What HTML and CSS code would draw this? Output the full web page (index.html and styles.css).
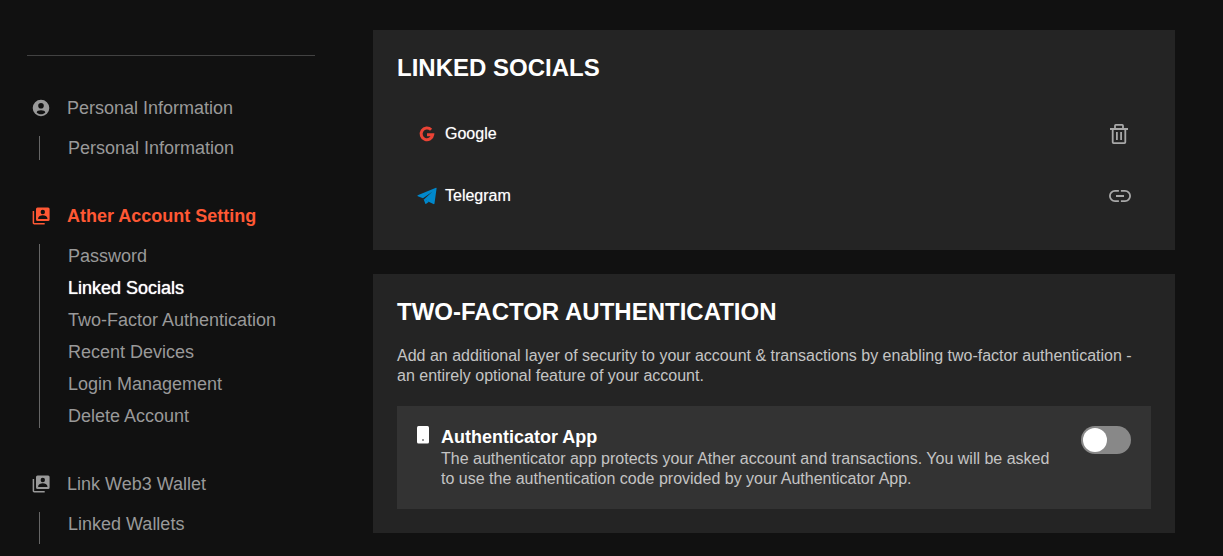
FILE: index.html
```html
<!DOCTYPE html>
<html lang="en">
<head>
<meta charset="utf-8">
<title>Account Settings</title>
<meta name="viewport" content="width=device-width, initial-scale=1">
<link rel="stylesheet" href="styles.css">
</head>
<body>
<div class="page">
  <nav class="sidebar" aria-label="Settings">
    <section class="group">
      <a class="group-title" href="#personal">
        <svg class="group-icon" viewBox="0 0 20 20" aria-hidden="true"><path fill="currentColor" fill-rule="evenodd" d="M10 1.700a8.300 8.300 0 1 0 0 16.600 8.300 8.300 0 0 0 0-16.600zM10 5a2.800 2.800 0 1 1 0 5.600A2.800 2.800 0 0 1 10 5zm0 7.200c2.300 0 4.300.9 4.300 2.200-1 1.200-2.500 1.800-4.300 1.800s-3.300-.6-4.300-1.800c0-1.300 2-2.200 4.300-2.200z"/></svg>
        Personal Information
      </a>
      <ul class="links">
        <li><a href="#personal">Personal Information</a></li>
      </ul>
    </section>
    <section class="group">
      <a class="group-title active" href="#account">
        <svg class="group-icon" viewBox="0 0 20 20" aria-hidden="true"><path fill="currentColor" fill-rule="evenodd" d="M6.500 1.600h10.600a1.500 1.500 0 0 1 1.500 1.500v10.500a1.500 1.500 0 0 1-1.500 1.500H6.500A1.500 1.500 0 0 1 5 13.600V3.100a1.500 1.500 0 0 1 1.500-1.500zM11.800 3.800a2.200 2.200 0 1 0 0 4.400 2.200 2.200 0 0 0 0-4.400zM7.200 13h9.200v-1c0-1.700-2.500-2.800-4.600-2.800S7.200 10.300 7.200 12z"/><path fill="none" stroke="currentColor" stroke-width="1.500" d="M2.400 5v12a.8.8 0 0 0 .8.800h10.500"/></svg>
        Ather Account Setting
      </a>
      <ul class="links">
        <li><a href="#password">Password</a></li>
        <li><a class="current" href="#socials" aria-current="page">Linked Socials</a></li>
        <li><a href="#two-factor">Two-Factor Authentication</a></li>
        <li><a href="#devices">Recent Devices</a></li>
        <li><a href="#login">Login Management</a></li>
        <li><a href="#delete">Delete Account</a></li>
      </ul>
    </section>
    <section class="group">
      <a class="group-title" href="#wallet">
        <svg class="group-icon" viewBox="0 0 20 20" aria-hidden="true"><path fill="currentColor" fill-rule="evenodd" d="M6.500 1.600h10.600a1.500 1.500 0 0 1 1.500 1.500v10.500a1.500 1.500 0 0 1-1.500 1.500H6.500A1.500 1.500 0 0 1 5 13.600V3.100a1.500 1.500 0 0 1 1.500-1.500zM11.800 3.800a2.200 2.200 0 1 0 0 4.400 2.200 2.200 0 0 0 0-4.400zM7.200 13h9.200v-1c0-1.700-2.500-2.800-4.600-2.800S7.200 10.300 7.200 12z"/><path fill="none" stroke="currentColor" stroke-width="1.500" d="M2.400 5v12a.8.8 0 0 0 .8.800h10.500"/></svg>
        Link Web3 Wallet
      </a>
      <ul class="links links-open">
        <li><a href="#wallets">Linked Wallets</a></li>
      </ul>
    </section>
  </nav>
  <main class="content">
    <section class="card" id="socials">
      <h2>LINKED SOCIALS</h2>
      <ul class="socials">
        <li class="social">
          <svg class="brand" viewBox="0 0 20 20" aria-hidden="true"><path fill="none" stroke="#ea4335" stroke-width="3" d="M14.100 5.800A5.800 5.800 0 1 0 15.700 10.700H10"/></svg>
          <span class="social-name">Google</span>
          <button class="icon-button" type="button" aria-label="Remove Google">
            <svg viewBox="0 0 24 24" aria-hidden="true"><path fill="none" stroke="currentColor" stroke-width="1.800" d="M3 7h18M8 7V3.700a.8.8 0 0 1 .8-.8h6.400a.8.8 0 0 1 .8.800V7M5.700 7v13.200a.9.900 0 0 0 .9.900h10.800a.9.900 0 0 0 .9-.9V7M9.900 10v8M14.100 10v8"/></svg>
          </button>
        </li>
        <li class="social">
          <svg class="brand" viewBox="0 0 20 20" aria-hidden="true"><path fill="#0088cc" d="M.7 9.200 19 1.700c.5-.1.700.2.600.6l-2.100 15.200c-.1.700-.6.900-1.100.6L6.900 13.400l8.400-7.600-9.300 6.500L.8 10.300c-.5-.4-.5-.8-.1-1.100z"/><path fill="#0088cc" d="M6.600 13.100 12 15.800l-2.800 2c-.4.300-.8.200-1-.2z"/></svg>
          <span class="social-name">Telegram</span>
          <button class="icon-button" type="button" aria-label="Link Telegram">
            <svg viewBox="0 0 24 24" aria-hidden="true"><path fill="none" stroke="currentColor" stroke-width="1.800" d="M11.900 6.900H8a5.100 5.100 0 0 0 0 10.200h3.900M13.900 6.900H18a5.100 5.100 0 0 1 0 10.200h-4.100M9 12h8"/></svg>
          </button>
        </li>
      </ul>
    </section>
    <section class="card" id="two-factor">
      <h2>TWO-FACTOR AUTHENTICATION</h2>
      <p class="intro">Add an additional layer of security to your account &amp; transactions by enabling two-factor authentication - an entirely optional feature of your account.</p>
      <div class="method">
        <svg class="phone" viewBox="0 0 12 18" aria-hidden="true"><rect width="12" height="17.500" rx="1.500" fill="#fff"/><rect x="5" y="13" width="2" height="2" fill="#999"/></svg>
        <div class="method-text">
          <label class="method-title" for="authenticator">Authenticator App</label>
          <p id="authenticator-help">The authenticator app protects your Ather account and transactions. You will be asked to use the authentication code provided by your Authenticator App.</p>
        </div>
        <input class="switch" id="authenticator" type="checkbox" role="switch" aria-describedby="authenticator-help">
      </div>
    </section>
  </main>
</div>
</body>
</html>
```
FILE: styles.css
```css
* {
  box-sizing: border-box;
}

body {
  margin: 0;
  background: #111;
  color: #fff;
  font: 16px/20px "Liberation Sans", Arial, sans-serif;
}

h2,
p,
ul {
  margin: 0;
  padding: 0;
}

ul {
  list-style: none;
}

a {
  color: inherit;
  text-decoration: none;
}

.page {
  display: flex;
  gap: 58px;
  padding: 30px 48px 0 27px;
}

.sidebar {
  flex: 0 0 288px;
  margin-top: 25px;
  padding-top: 40px;
  border-top: 1px solid #424242;
  color: #999;
  font-size: 18px;
  line-height: 24px;
}

.group {
  margin-bottom: 44px;
}

.group:last-child {
  margin-bottom: 0;
}

.group-title {
  display: flex;
  align-items: center;
  gap: 16px;
  padding-left: 4px;
}

.group-title.active {
  color: #ff5834;
  font-weight: 700;
}

.group-icon {
  width: 20px;
  height: 20px;
}

.links {
  display: flex;
  flex-direction: column;
  gap: 8px;
  margin: 16px 0 0 12px;
  padding-left: 28px;
  border-left: 1px solid #666;
}

.links-open {
  padding-bottom: 8px;
}

.links .current {
  color: #fff;
  text-shadow: 0 0 1px #fff;
}

.content {
  display: flex;
  flex: 1;
  flex-direction: column;
  gap: 24px;
}

.card {
  padding: 24px;
  background: #242424;
}

.card h2 {
  font-size: 24px;
  line-height: 28px;
}

.socials {
  display: flex;
  flex-direction: column;
  gap: 14px;
  padding: 28px 20px 6px;
}

.social {
  display: flex;
  align-items: center;
  gap: 8px;
  height: 48px;
}

.brand {
  width: 20px;
  height: 20px;
}

.social-name {
  flex: 1;
  text-shadow: 0 0 1px #999;
}

.icon-button {
  display: flex;
  padding: 0;
  border: 0;
  background: none;
  color: #a8a8a8;
  cursor: pointer;
}

.icon-button svg {
  width: 24px;
  height: 24px;
}

.intro {
  margin-top: 20px;
  color: #c4c4c4;
}

.method {
  display: flex;
  align-items: flex-start;
  margin-top: 20px;
  padding: 20px;
  background: #333;
}

.phone {
  width: 12px;
  height: 18px;
  margin-right: 12px;
}

.method-text {
  flex: 1;
  padding-right: 24px;
  color: #c4c4c4;
}

.method-title {
  display: block;
  color: #fff;
  font-size: 18px;
  font-weight: 700;
  line-height: 23px;
}

.switch {
  position: relative;
  width: 50px;
  height: 28px;
  margin: 0;
  border-radius: 14px;
  background: #888;
  appearance: none;
  cursor: pointer;
}

.switch::before {
  position: absolute;
  top: 2px;
  left: 2px;
  width: 24px;
  height: 24px;
  border-radius: 50%;
  background: #fff;
  content: "";
}

.switch:checked {
  background: #ff5834;
}

.switch:checked::before {
  left: 24px;
}
```
